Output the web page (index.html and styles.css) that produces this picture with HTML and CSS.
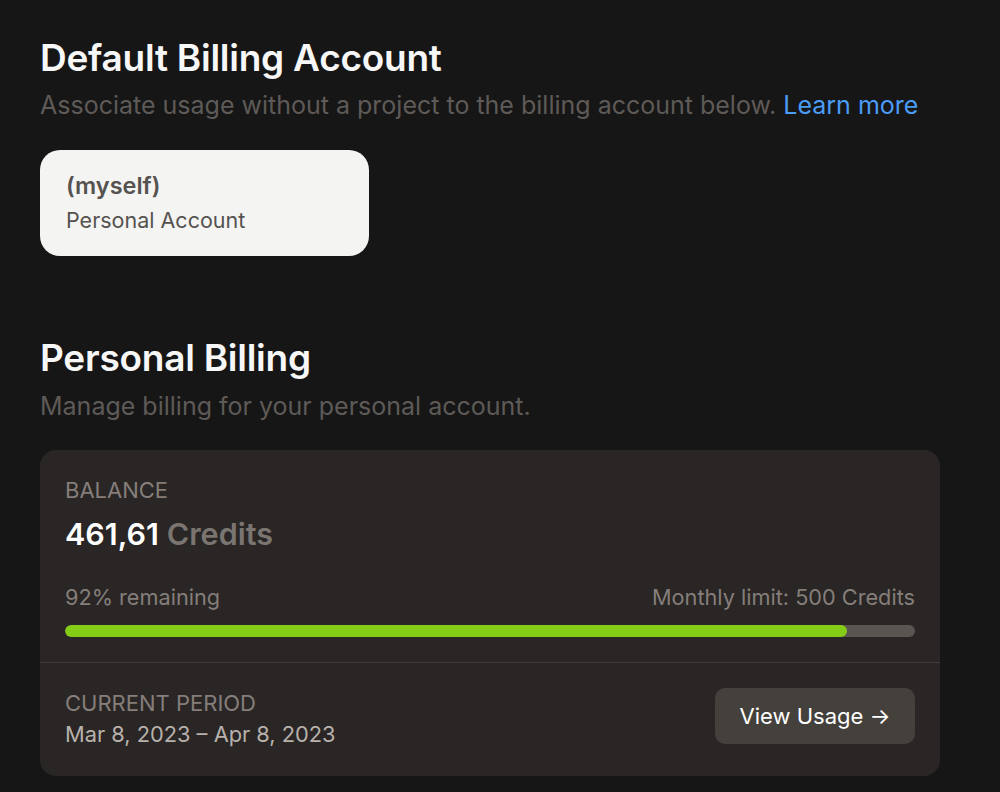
FILE: index.html
```html
<!DOCTYPE html>
<html lang="en">
<head>
<meta charset="utf-8">
<title>Billing</title>
<link rel="stylesheet" href="styles.css">
</head>
<body>
<main class="page">
  <section class="section">
    <h1 class="title">Default Billing Account</h1>
    <p class="subtitle">Associate usage without a project to the billing account below. <a class="link" href="#">Learn more</a></p>
    <div class="account">
      <div class="account-name">(myself)</div>
      <div class="account-type">Personal Account</div>
    </div>
  </section>
  <section class="section personal">
    <h1 class="title">Personal Billing</h1>
    <p class="subtitle">Manage billing for your personal account.</p>
    <div class="card">
      <div class="card-top">
        <div class="label">BALANCE</div>
        <div class="balance"><span class="amount">461,61</span> <span class="unit">Credits</span></div>
        <div class="meter-row">
          <span>92% remaining</span>
          <span>Monthly limit: 500 Credits</span>
        </div>
        <div class="meter"><div class="meter-fill" style="width:92%"></div></div>
      </div>
      <div class="card-bottom">
        <div class="period">
          <div class="label">CURRENT PERIOD</div>
          <div class="dates">Mar 8, 2023 – Apr 8, 2023</div>
        </div>
        <button class="btn">View Usage →</button>
      </div>
    </div>
  </section>
</main>
</body>
</html>
```
FILE: styles.css
```css
* { box-sizing: border-box; }
html, body { margin: 0; padding: 0; }
body {
  background: #161616;
  font-family: Inter, "Noto Sans", sans-serif;
  color: #f5f5f5;
}
.page {
  padding: 36px 40px 0 40px;
  width: 980px;
}
.title {
  margin: 0;
  font-size: 37px;
  font-weight: 600;
  line-height: 44px;
  color: #f7f7f7;
  letter-spacing: -0.25px;
}
.subtitle {
  margin: 9px 0 0 0;
  font-size: 25px;
  line-height: 32px;
  color: #5e5a57;
}
.personal .subtitle { margin-top: 10px; }
.link {
  color: #4a9cf5;
  text-decoration: none;
}
.account {
  margin-top: 29px;
  width: 329px;
  height: 106px;
  background: #f4f4f2;
  border-radius: 20px;
  padding: 22px 26px;
}
.account-name {
  font-size: 23.5px;
  font-weight: 600;
  color: #555250;
  line-height: 28px;
}
.account-type {
  font-size: 21.5px;
  color: #555250;
  line-height: 28px;
  margin-top: 6px;
}
.personal { margin-top: 80px; }
.card {
  margin-top: 28px;
  background: #292625;
  border-radius: 16px;
  overflow: hidden;
}
.card-top {
  padding: 26px 25px 25px 25px;
  border-bottom: 1px solid #3f3b39;
}
.label {
  font-size: 22px;
  line-height: 28px;
  color: #857e7a;
}
.balance {
  margin-top: 12px;
  font-size: 30.5px;
  line-height: 36px;
  font-weight: 600;
}
.amount { color: #ffffff; }
.unit { color: #7b7572; }
.meter-row {
  margin-top: 31px;
  display: flex;
  justify-content: space-between;
  font-size: 21.7px;
  line-height: 28px;
  color: #857e7a;
}
.meter {
  margin-top: 14px;
  height: 12px;
  border-radius: 6px;
  background: #5a5551;
  overflow: hidden;
}
.meter-fill {
  height: 100%;
  background: #84cc16;
  border-radius: 6px;
}
.card-bottom {
  display: flex;
  justify-content: space-between;
  align-items: flex-start;
  padding: 26px 25px 27px 25px;
}
.dates {
  font-size: 21.8px;
  line-height: 30px;
  color: #b8b1ab;
  margin-top: 2px;
}
.btn {
  width: 200px;
  height: 56px;
  margin-top: -1px;
  border: none;
  border-radius: 10px;
  background: #44413d;
  color: #ffffff;
  font-family: inherit;
  font-size: 22px;
  cursor: pointer;
}
```
